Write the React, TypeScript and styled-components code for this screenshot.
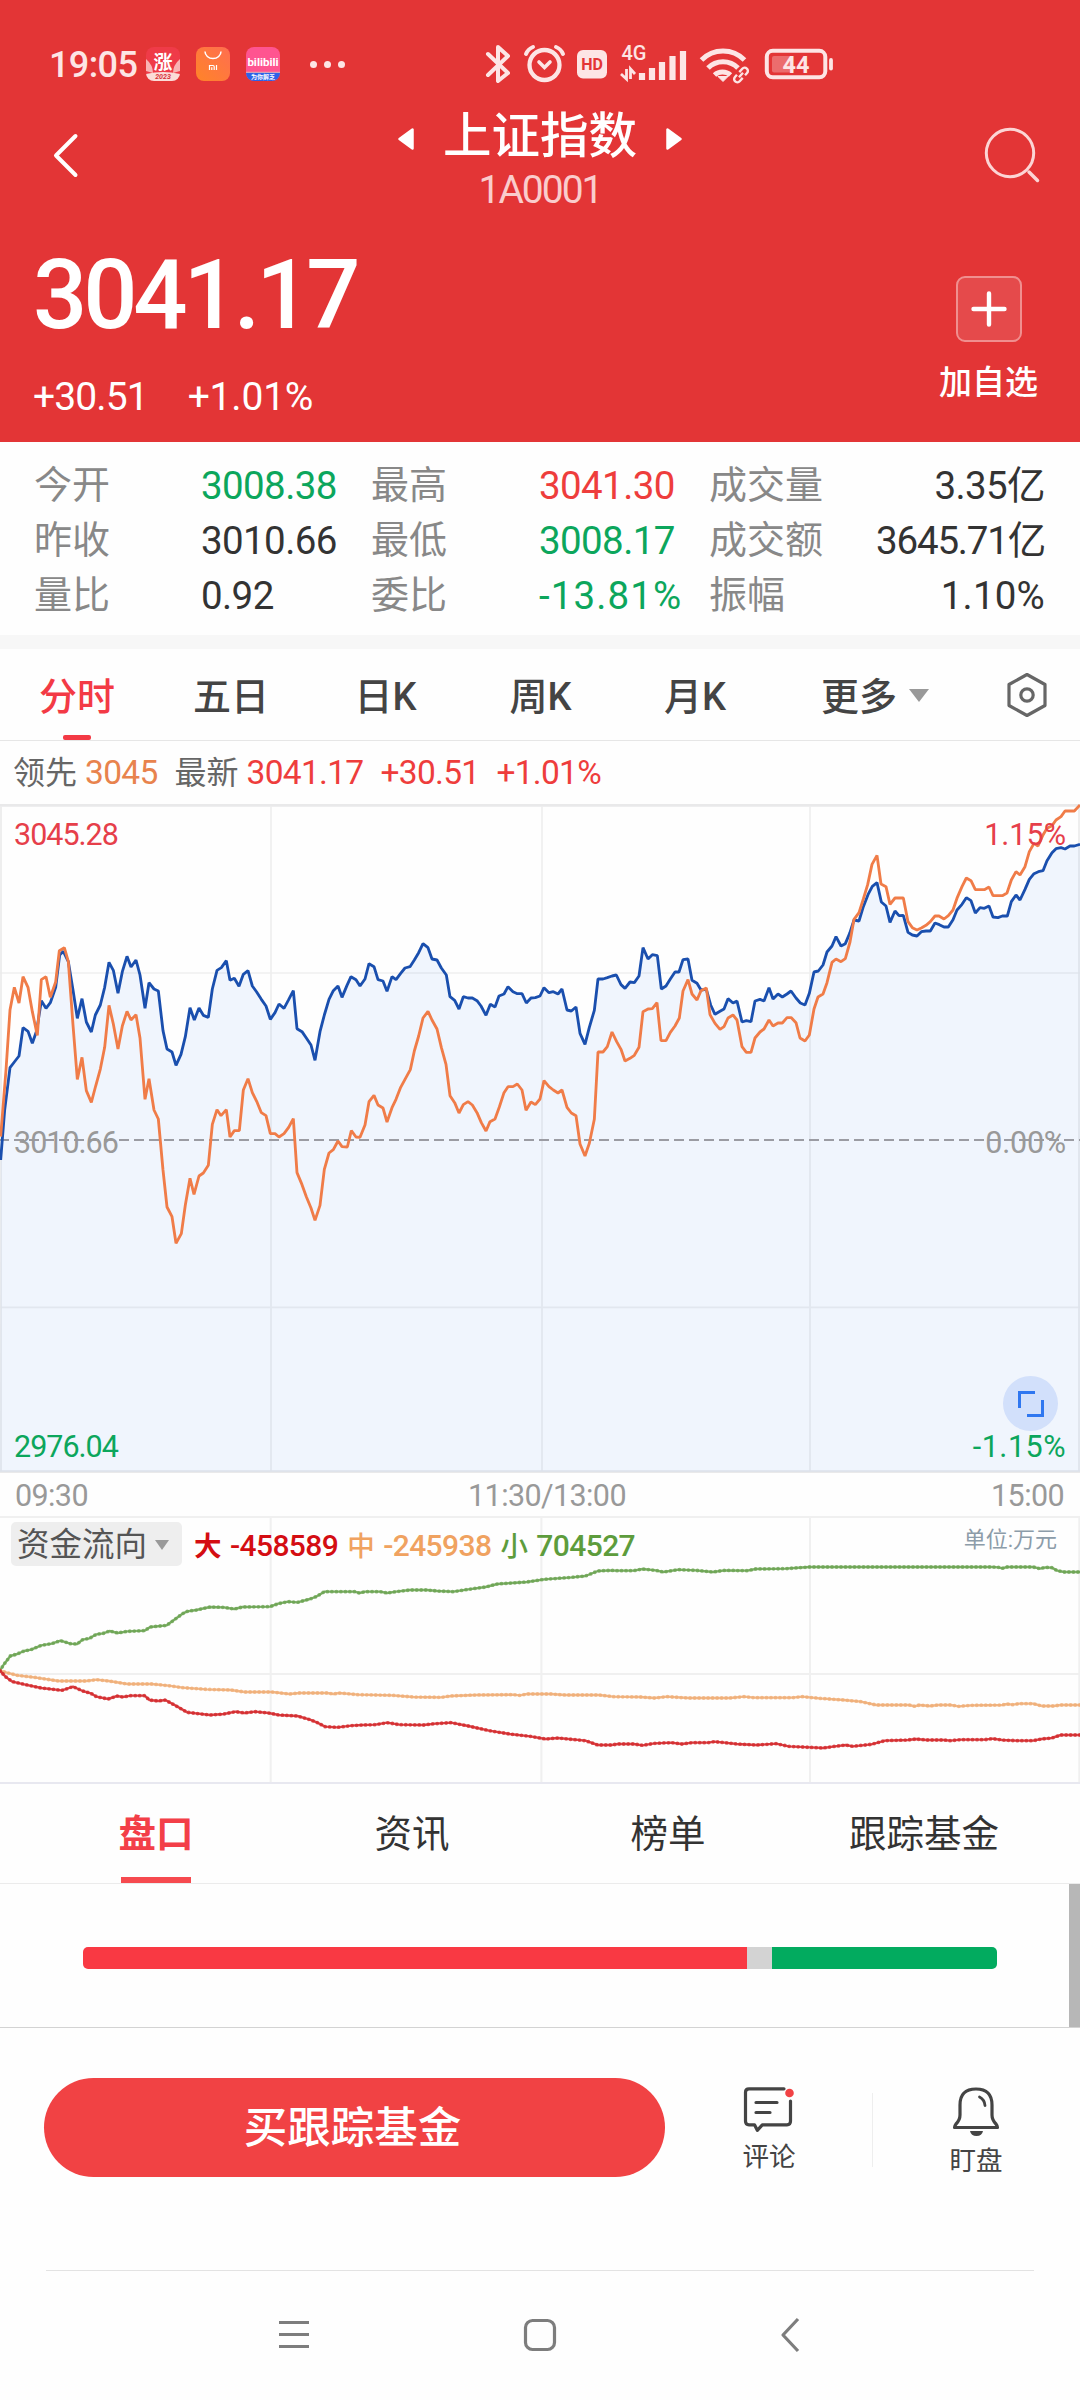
import React from "react";
import styled, { createGlobalStyle } from "styled-components";

const RED = "#e33536";
const UP = "#ee3d3c";
const DOWN = "#0ca65c";

const GlobalStyle = createGlobalStyle`
  * { box-sizing: border-box; }
  body { margin: 0; background: #fefefe; }
`;

const Screen = styled.div`
  width: 1080px;
  height: 2400px;
  overflow: hidden;
  display: flex;
  flex-direction: column;
  background: #fefefe;
  color: #333;
  font-family: Roboto, "Noto Sans CJK SC", sans-serif;
  white-space: nowrap;
`;

/* ---------- header ---------- */
const Header = styled.header`
  height: 442px;
  flex: none;
  background: ${RED};
  color: #fff;
`;

const StatusBar = styled.div`
  height: 104px;
  padding: 24px 246px 0 49px;
  display: flex;
  align-items: center;
`;

const Clock = styled.span`
  width: 97px;
  font-size: 36px;
  font-weight: 500;
  line-height: 40px;
  letter-spacing: -0.6px;
  color: #fde5e5;
  padding-top: 2px;
`;

const AppIcons = styled.div`
  display: flex;
  gap: 16px;
`;

const StatusIcons = styled.svg`
  margin-left: auto;
  display: block;
`;

const TitleBar = styled.div`
  height: 112px;
  display: grid;
  grid-template-columns: 200px 1fr 200px;
`;

const BackSlot = styled.div`
  padding: 29px 0 0 53px;
`;

const SearchSlot = styled.div`
  padding: 22px 39px 0 0;
  display: flex;
  justify-content: flex-end;
  align-items: flex-start;
`;

const TitleBlock = styled.div`
  display: flex;
  flex-direction: column;
  align-items: center;
`;

const TitleLine = styled.div`
  display: flex;
  align-items: center;
  gap: 29px;
  height: 62px;
  padding-top: 8px;
  svg { margin-bottom: 1px; }
`;

const Title = styled.h1`
  margin: 0 0 4px;
  font-size: 48.5px;
  line-height: 60px;
  font-weight: 500;
`;

const Code = styled.span`
  font-size: 39px;
  line-height: 44px;
  letter-spacing: -2px;
  color: #facccc;
  margin-top: 2px;
`;

const PriceArea = styled.div`
  display: flex;
  justify-content: space-between;
  padding: 0 42px 0 33px;
`;

const Price = styled.div`
  font-size: 95.5px;
  font-weight: 500;
  line-height: 110px;
  letter-spacing: -4.1px;
  margin-top: 24px;
`;

const Changes = styled.div`
  display: flex;
  gap: 40px;
  font-size: 39px;
  line-height: 44px;
  letter-spacing: -0.9px;
  margin-top: 25px;
  span + span { letter-spacing: -0.2px; }
`;

const AddButton = styled.button`
  border: 0;
  padding: 0;
  background: none;
  color: inherit;
  font: inherit;
  display: flex;
  flex-direction: column;
  align-items: center;
  margin-top: 60px;
  font-size: 33px;
  font-weight: 500;
  line-height: 44px;
  gap: 19px;
  height: 133px;
`;

const PlusBox = styled.span`
  width: 66px;
  height: 66px;
  border: 2px solid #f08f8f;
  border-radius: 9px;
  background: #e54a4b;
  display: flex;
  align-items: center;
  justify-content: center;
`;

/* ---------- statistics ---------- */
const Stats = styled.section`
  height: 193px;
  flex: none;
  padding: 16px 35px 0 34px;
  display: grid;
  grid-template-columns: 167px 170px 168px 170px 1fr;
  grid-auto-rows: 55px;
  font-size: 38.5px;
  line-height: 55px;
`;

const StatLabel = styled.span`
  color: #888;
  font-size: 38px;
`;

const StatValue = styled.span<{ $color?: string; $track?: number }>`
  color: ${(p) => p.$color || "#333"};
  letter-spacing: ${(p) => p.$track ?? -0.6}px;
`;

const LastCell = styled.span`
  display: flex;
  justify-content: space-between;
`;

const Band = styled.div`
  height: 14px;
  flex: none;
  background: #f7f7f7;
`;

/* ---------- period tabs ---------- */
const PeriodTabs = styled.nav`
  height: 92px;
  flex: none;
  display: flex;
  border-bottom: 1px solid #e6e6e6;
`;

const PeriodTab = styled.div<{ $active?: boolean; $width?: number }>`
  width: ${(p) => p.$width || 154}px;
  display: flex;
  justify-content: center;
  align-items: center;
  gap: 12px;
  position: relative;
  font-size: 38px;
  font-weight: 500;
  padding-bottom: 2px;
  color: ${(p) => (p.$active ? "#f33a45" : "#444")};
  svg, i { margin-top: 3px; }
  &::after {
    content: "";
    display: ${(p) => (p.$active ? "block" : "none")};
    position: absolute;
    bottom: 0;
    left: 63px;
    width: 28px;
    height: 5px;
    border-radius: 2px;
    background: #f33a45;
  }
`;

const Caret = styled.i<{ $w: number; $h: number }>`
  width: 0;
  height: 0;
  border: ${(p) => p.$w / 2}px solid transparent;
  border-top: ${(p) => p.$h}px solid #999;
  border-bottom: 0;
`;

const Legend = styled.div`
  height: 63px;
  flex: none;
  padding-left: 13px;
  display: flex;
  align-items: baseline;
  line-height: 63px;
  font-size: 33.5px;
  letter-spacing: -0.7px;
  color: ${UP};
`;

const LegendName = styled.span<{ $gap?: number }>`
  font-size: 32px;
  letter-spacing: 0;
  color: #666;
  margin-left: ${(p) => p.$gap || 0}px;
`;

const LegendValue = styled.span<{ $color?: string; $gap?: number }>`
  color: ${(p) => p.$color || UP};
  margin-left: ${(p) => p.$gap || 8}px;
`;

/* ---------- charts ---------- */
const ChartBox = styled.div<{ $h: number }>`
  height: ${(p) => p.$h}px;
  flex: none;
  position: relative;
  svg { display: block; }
`;

const ChartLabel = styled.span<{ $top: number; $right?: boolean; $color: string; $track?: number }>`
  position: absolute;
  top: ${(p) => p.$top}px;
  ${(p) => (p.$right ? "right: 14px;" : "left: 14px;")}
  font-size: 30.5px;
  line-height: 36px;
  letter-spacing: ${(p) => p.$track ?? -1}px;
  color: ${(p) => p.$color};
`;

const ExpandButton = styled.div`
  position: absolute;
  left: 1003px;
  top: 572px;
  width: 55px;
  height: 55px;
  border-radius: 50%;
  background: #d2e0fb;
`;

const TimeAxis = styled.div`
  height: 42px;
  flex: none;
  padding: 3px 16px 0 15px;
  display: grid;
  grid-template-columns: 1fr auto 1fr;
  font-size: 30.5px;
  line-height: 38px;
  letter-spacing: -0.6px;
  color: #999;
  span:nth-child(2) { padding-left: 15px; }
  span:last-child { text-align: right; }
`;

const FlowLegend = styled.div`
  position: absolute;
  left: 11px;
  right: 23px;
  top: 6px;
  height: 44px;
  display: flex;
  align-items: center;
  font-size: 30px;
  letter-spacing: -0.6px;
`;

const FlowChip = styled.span`
  width: 171px;
  height: 44px;
  border-radius: 5px;
  background: #eee;
  color: #555;
  font-size: 32.5px;
  line-height: 44px;
  letter-spacing: 0;
  display: flex;
  align-items: center;
  padding: 2px 0 0 6px;
  gap: 8px;
  margin-right: 12px;
`;

const FlowItem = styled.span<{ $color: string; $bold?: boolean }>`
  color: ${(p) => p.$color};
  margin-right: 9px;
  font-weight: 500;
  b {
    font-size: 27.5px;
    font-weight: ${(p) => (p.$bold ? 700 : 500)};
    margin-right: 9px;
  }
`;

const FlowUnit = styled.span`
  margin-left: auto;
  font-size: 22px;
  letter-spacing: 0;
  color: #8c9ca9;
  padding-bottom: 14px;
`;

/* ---------- section tabs ---------- */
const SectionTabs = styled.nav`
  height: 100px;
  flex: none;
  padding: 0 28px;
  display: grid;
  grid-template-columns: repeat(4, 256px);
  border-bottom: 1px solid #ebebeb;
`;

const SectionTab = styled.div<{ $active?: boolean }>`
  display: flex;
  justify-content: center;
  align-items: center;
  padding-bottom: 6px;
  font-size: 37.5px;
  font-weight: ${(p) => (p.$active ? 700 : 400)};
  color: ${(p) => (p.$active ? "#f33f48" : "#333")};
  position: relative;
  &::after {
    content: "";
    display: ${(p) => (p.$active ? "block" : "none")};
    position: absolute;
    bottom: 0;
    left: 93px;
    width: 70px;
    height: 6px;
    background: #f64a4f;
  }
`;

const Panel = styled.section`
  height: 144px;
  flex: none;
  display: flex;
  justify-content: space-between;
  align-items: flex-start;
  border-bottom: 1px solid #d3d3d3;
  padding-left: 83px;
`;

const RatioBar = styled.div`
  display: flex;
  width: 914px;
  height: 22px;
  margin-top: 63px;
  border-radius: 5px;
  overflow: hidden;
`;

const RatioPart = styled.div<{ $color: string }>`
  background: ${(p) => p.$color};
`;

const ScrollThumb = styled.div`
  width: 11px;
  height: 143px;
  background: #b7b7b7;
`;

/* ---------- bottom ---------- */
const ActionBar = styled.div`
  height: 243px;
  flex: none;
  margin: 0 46px;
  border-bottom: 1px solid #e3e3e3;
  display: flex;
  align-items: flex-start;
`;

const BuyButton = styled.button`
  width: 621px;
  height: 99px;
  margin: 50px 0 0 -2px;
  padding: 3px 4px 0 0;
  border: 0;
  border-radius: 50px;
  background: #f14244;
  color: #fff;
  font: 500 43.5px/96px Roboto, "Noto Sans CJK SC", sans-serif;
`;

const Action = styled.div<{ $left: number; $gap: number }>`
  width: 54px;
  margin: 58px 0 0 ${(p) => p.$left}px;
  display: flex;
  flex-direction: column;
  align-items: center;
  font-size: 26.5px;
  line-height: 32px;
  color: #444;
  svg { display: block; margin-bottom: ${(p) => p.$gap}px; }
`;

const Divider = styled.div`
  width: 1px;
  height: 74px;
  margin: 65px 0 0 76px;
  background: #eee;
`;

const SystemNav = styled.div`
  height: 129px;
  flex: none;
  padding: 46px 280px 0 278px;
  display: flex;
  justify-content: space-between;
  svg { display: block; }
`;

const HomeGlyph = styled.svg`
  margin-right: 10px;
`;

/* Points are stored on a grid three times finer than the drawn pixels. */
const INDEX_LINE: number[] = [
  2,1110, 14,960, 30,833, 43,816, 57,798, 69,713, 84,724, 97,760, 110,722, 124,632, 138,655, 151,638, 167,592, 179,495, 190,484, 205,515, 219,600, 232,685, 246,626, 259,696, 274,726, 286,675, 301,645, 314,592, 327,517, 340,541, 354,610, 367,545, 381,499, 393,531, 408,510, 420,555, 435,655, 447,578, 462,597, 475,603, 489,722, 501,777, 516,786, 528,826, 543,793, 556,740, 570,653, 583,690, 597,654, 610,676, 625,682, 637,597, 651,541, 664,533, 679,512, 690,571, 703,565, 717,589, 730,553, 744,542, 757,588, 770,606, 784,628, 798,648, 811,688, 825,668, 837,642, 852,655, 866,629, 880,602, 891,716, 906,725, 919,744, 933,765, 945,811, 960,725, 973,675, 987,628, 1000,602, 1014,588, 1026,622, 1041,586, 1053,560, 1068,569, 1080,588,
  1095,567, 1107,521, 1122,530, 1134,569, 1149,573, 1161,604, 1176,560, 1188,569, 1202,550, 1215,534, 1230,530, 1243,510, 1256,488, 1269,461, 1284,473, 1296,507, 1311,510, 1324,534, 1339,555, 1350,620, 1364,631, 1377,657, 1390,620, 1404,624, 1417,624, 1431,632, 1443,648, 1458,676, 1471,643, 1485,651, 1497,618, 1512,612, 1524,590, 1539,605, 1552,611, 1566,611, 1579,639, 1593,624, 1606,623, 1620,618, 1632,593, 1647,608, 1660,605, 1674,612, 1686,597, 1701,660, 1714,663, 1728,651, 1740,730, 1755,763, 1768,712, 1783,661, 1794,567, 1809,567, 1822,563, 1836,558, 1849,555, 1863,584, 1875,595, 1890,576, 1903,578, 1917,558, 1929,473, 1944,507, 1957,494, 1972,497, 1984,597, 1998,588, 2011,567, 2025,546, 2037,546, 2049,509, 2064,507, 2076,571, 2091,580, 2103,600, 2119,598, 2132,645, 2145,673, 2160,664,
  2172,657, 2184,626, 2199,639, 2211,633, 2226,696, 2239,692, 2253,695, 2265,633, 2280,628, 2292,633, 2307,593, 2319,627, 2334,612, 2347,621, 2361,612, 2373,603, 2388,624, 2401,639, 2415,645, 2428,610, 2442,546, 2455,543, 2469,525, 2481,486, 2496,468, 2508,440, 2523,468, 2536,461, 2549,430, 2562,390, 2577,393, 2590,350, 2604,314, 2617,289, 2631,278, 2644,336, 2658,348, 2670,397, 2685,363, 2697,377, 2710,376, 2724,427, 2737,435, 2751,438, 2764,425, 2778,423, 2791,423, 2805,399, 2818,404, 2832,411, 2845,411, 2859,389, 2871,360, 2886,343, 2899,323, 2913,332, 2926,369, 2940,353, 2953,355, 2967,348, 2979,381, 2994,383, 3007,378, 3022,378, 3034,335, 3048,315, 3060,330, 3075,298, 3088,268, 3102,251, 3115,245, 3129,242, 3141,212, 3156,188, 3168,176, 3183,173, 3195,177, 3210,168, 3223,168, 3240,163,
];

const LEAD_LINE: number[] = [
  2,1040, 18,840, 30,660, 43,592, 57,639, 69,560, 84,592, 97,665, 112,736, 124,569, 138,560, 151,622, 167,576, 178,482, 193,473, 205,515, 219,705, 232,868, 246,802, 259,902, 274,937, 287,888, 301,837, 314,772, 327,646, 340,702, 354,777, 367,708, 381,664, 393,690, 408,674, 420,744, 435,928, 447,866, 462,960, 475,987, 489,1140, 501,1251, 516,1280, 528,1360, 544,1331, 556,1245, 570,1165, 582,1213, 597,1158, 610,1149, 625,1126, 637,1003, 651,959, 663,977, 679,959, 690,1041, 703,1022, 718,1022, 730,900, 744,866, 757,908, 770,934, 784,968, 798,977, 811,1031, 825,1031, 837,1041, 852,1031, 866,1012, 880,986, 891,1148, 906,1184, 919,1220, 933,1254, 945,1291, 960,1246, 973,1138, 987,1089, 1000,1079, 1014,1053, 1026,1070, 1042,1071, 1054,1022, 1068,1041, 1080,1042,
  1095,1005, 1107,935, 1122,916, 1134,945, 1149,954, 1161,996, 1176,953, 1188,928, 1202,892, 1215,868, 1231,839, 1243,783, 1256,738, 1269,684, 1284,664, 1296,690, 1311,717, 1324,772, 1338,823, 1350,917, 1364,938, 1377,969, 1390,944, 1404,935, 1417,945, 1431,968, 1444,998, 1458,1023, 1470,995, 1485,987, 1498,951, 1512,908, 1524,890, 1539,890, 1552,882, 1566,900, 1578,961, 1593,936, 1606,944, 1620,927, 1632,872, 1647,890, 1660,900, 1674,909, 1686,900, 1701,952, 1714,969, 1728,977, 1740,1062, 1755,1098, 1768,1060, 1783,988, 1794,786, 1809,786, 1822,770, 1836,726, 1850,755, 1863,778, 1875,813, 1890,805, 1903,796, 1917,772, 1929,665, 1944,657, 1957,656, 1971,638, 1983,752, 1998,752, 2011,727, 2025,708, 2038,684, 2049,603, 2064,569, 2076,612, 2091,630, 2103,602, 2119,594, 2130,674, 2145,700, 2160,718,
  2172,710, 2184,684, 2199,675, 2211,690, 2226,770, 2239,787, 2253,787, 2265,744, 2280,726, 2292,717, 2307,690, 2319,708, 2334,699, 2347,699, 2361,683, 2374,683, 2388,698, 2400,744, 2415,753, 2428,735, 2442,657, 2454,621, 2469,612, 2481,578, 2496,517, 2508,507, 2523,515, 2536,506, 2550,456, 2562,388, 2577,368, 2590,327, 2603,284, 2616,223, 2631,196, 2643,282, 2658,290, 2670,343, 2685,324, 2697,324, 2710,324, 2724,395, 2737,413, 2751,420, 2764,414, 2778,406, 2791,395, 2805,378, 2817,378, 2832,387, 2845,377, 2859,360, 2872,322, 2886,290, 2899,264, 2913,272, 2926,299, 2940,299, 2953,299, 2967,291, 2979,317, 2994,317, 3007,317, 3021,309, 3034,270, 3048,245, 3060,255, 3075,230, 3088,185, 3102,160, 3114,168, 3129,135, 3141,115, 3156,107, 3168,90, 3183,80, 3195,63, 3210,63, 3223,63, 3240,45,
];

/* Money-flow points: 1568 units across the day, 3 units per pixel down. */
const SMALL_FLOW: number[] = [
  0,512, 5,495, 15,468, 25,462, 35,453, 45,449, 60,436, 75,431, 88,422, 102,431, 112,432, 120,419, 130,415, 140,403, 150,400, 159,393, 171,399, 185,394, 210,392, 218,381, 242,376, 252,361, 265,341, 272,334, 285,330, 305,321, 325,322, 340,327, 352,321, 392,320, 404,311, 418,305, 432,307, 450,297, 460,289, 471,275, 515,275, 522,279, 530,275, 552,275, 562,279, 575,275, 595,270, 620,270, 635,273, 658,275, 680,268, 705,261, 722,252, 765,246, 790,238, 830,232, 850,228, 868,213, 888,211, 895,212, 920,212, 933,207, 952,211, 963,216, 985,209, 1010,211, 1035,216, 1052,211, 1085,212, 1097,207, 1140,206, 1175,201, 1300,201, 1440,201, 1450,202, 1455,205, 1462,201, 1500,201, 1510,206, 1518,202, 1527,203, 1535,212, 1545,216, 1568,216,
];
const MID_FLOW: number[] = [
  0,512, 10,518, 25,526, 50,532, 85,543, 125,543, 140,539, 158,543, 185,552, 220,552, 245,557, 265,563, 300,568, 335,570, 355,576, 395,576, 420,582, 435,579, 475,579, 484,582, 492,579, 520,584, 570,586, 600,591, 640,592, 655,588, 690,585, 745,584, 755,586, 765,582, 800,582, 820,585, 870,585, 890,590, 930,591, 950,594, 968,590, 1000,594, 1060,594, 1080,590, 1095,593, 1150,593, 1165,590, 1190,595, 1225,600, 1250,605, 1272,615, 1320,615, 1328,619, 1335,615, 1350,618, 1362,615, 1380,615, 1392,619, 1410,616, 1455,615, 1462,612, 1470,614, 1480,611, 1500,611, 1513,618, 1530,618, 1540,615, 1568,615,
];
const BIG_FLOW: number[] = [
  0,512, 8,530, 18,545, 35,553, 60,564, 90,571, 106,560, 120,573, 132,580, 140,590, 157,597, 170,588, 178,591, 190,587, 210,587, 217,600, 230,603, 240,600, 255,617, 272,637, 305,645, 325,642, 342,635, 355,639, 370,635, 390,639, 405,645, 432,648, 450,659, 460,667, 472,680, 490,682, 510,677, 525,675, 545,674, 562,668, 580,674, 615,675, 632,671, 655,668, 680,678, 710,692, 740,702, 770,709, 792,717, 810,714, 850,722, 868,735, 888,735, 897,732, 920,732, 933,736, 950,730, 975,728, 990,732, 1005,728, 1028,728, 1037,725, 1052,728, 1070,732, 1098,735, 1127,731, 1145,739, 1185,743, 1195,744, 1212,739, 1228,735, 1238,739, 1265,733, 1285,722, 1318,720, 1330,717, 1345,720, 1370,720, 1380,722, 1395,719, 1430,719, 1441,716, 1455,720, 1475,722, 1500,722, 1512,717, 1527,714, 1540,705, 1568,705,
];

const toPath = (pts: number[]) => {
  let d = "";
  for (let i = 0; i < pts.length; i += 2) d += `${i ? "L" : "M"}${pts[i]} ${pts[i + 1]}`;
  return d;
};

const IndexChart = () => {
  const line = toPath(INDEX_LINE);
  return (
    <svg width="1080" height="670" viewBox="0 42 3240 2010">
      <g stroke="#efefef" strokeWidth="5" fill="none">
        <path d="M813 50V2045M1626 50V2045M2430 50V2045M0 549H3240M0 1552H3240" />
        <path d="M3 50V2045M3237 50V2045" stroke="#ebebeb" />
        <path d="M0 46H3240M0 2045H3240" stroke="#e9e9ea" strokeWidth="8" />
      </g>
      <path d={`${line}V2045H0Z`} fill="#2470f0" fillOpacity=".064" />
      <path d="M-3 1050H3240" stroke="#9b9ca3" strokeWidth="6" strokeDasharray="30 15" />
      <path d={line} fill="none" stroke="#1a4fae" strokeWidth="8.500" strokeLinejoin="bevel" />
      <path d={toPath(LEAD_LINE)} fill="none" stroke="#f07c48" strokeWidth="8.500" strokeLinejoin="bevel" />
    </svg>
  );
};

const FlowLine = ({ points, color }: { points: number[]; color: string }) => (
  <g fill="none" stroke={color} strokeLinecap="round" strokeLinejoin="round">
    <path d={toPath(points)} strokeWidth="2.4" vectorEffect="non-scaling-stroke" opacity=".85" />
    <path d={toPath(points)} strokeWidth="3.8" strokeDasharray="0 4.5" vectorEffect="non-scaling-stroke" opacity=".75" />
  </g>
);

const FlowChart = () => (
  <svg width="1080" height="268" viewBox="0 48 1568 804" preserveAspectRatio="none">
    <g stroke="#f0f0f0" strokeWidth="2">
      <path d="M0 51H1568M0 522H1568" vectorEffect="non-scaling-stroke" />
      <path d="M393 51V846M786 51V846M1176 51V846M1567 51V846" vectorEffect="non-scaling-stroke" />
      <path d="M0 849H1568" stroke="#e8e8f0" vectorEffect="non-scaling-stroke" />
    </g>
    <FlowLine points={SMALL_FLOW} color="#6aa350" />
    <FlowLine points={MID_FLOW} color="#f0ad75" />
    <FlowLine points={BIG_FLOW} color="#d4282b" />
  </svg>
);

const StatusGlyphs = () => (
  <StatusIcons width="350" height="44" viewBox="484 42 350 44" fill="none" stroke="#fde5e5">
    <path d="M488 54L508 73L498 81V47L508 56L488 75" strokeWidth="4" strokeLinejoin="round" strokeLinecap="round" />
    <circle cx="544.500" cy="65" r="15" strokeWidth="4.300" />
    <path d="M539 62l5.500 5.500L550 62" strokeWidth="3.600" strokeLinecap="round" />
    <path d="M526 54q2-5 7-7M563 54q-2-5-7-7" strokeWidth="4" strokeLinecap="round" />
    <rect x="577" y="50" width="30" height="28.500" rx="6" fill="#fde5e5" stroke="none" />
    <text x="592" y="70" fontSize="16" fontWeight="700" fontFamily="Roboto, sans-serif" textAnchor="middle" fill={RED} stroke="none">HD</text>
    <text x="621.500" y="60" fontSize="20" fontWeight="500" fontFamily="Roboto, sans-serif" fill="#fde5e5" stroke="none">4G</text>
    <path d="M626.500 69V79L621 74M630.500 79V69L635 74" strokeWidth="2.800" />
    <path d="M642 73V80M652 68V80M662 62V80M672.500 56V80M683 51V80" strokeWidth="6.200" />
    <path d="M701.500 60a30 30 0 0 1 43 0M708 68a21 21 0 0 1 30 0M714.500 75a12 12 0 0 1 16 0" strokeWidth="5" />
    <path d="M718 76.500h10l-5 5z" fill="#fde5e5" strokeWidth="1" />
    <g transform="translate(741 75) rotate(-48)" strokeWidth="2.400">
      <path d="M-1 3.200h-4.500a3.200 3.200 0 0 1 0-6.400h3M1-3.200h4.500a3.200 3.200 0 0 1 0 6.400h-3" />
      <path d="M-3 0H3" />
    </g>
    <rect x="766.800" y="50.800" width="58.500" height="26.500" rx="6" strokeWidth="4" />
    <rect x="772" y="56" width="20" height="16.500" rx="2" fill="#ec6c6d" stroke="none" />
    <path d="M831 60v8.500" strokeWidth="3.800" strokeLinecap="round" />
    <text x="796" y="73" fontSize="23.500" fontWeight="700" fontFamily="Roboto, sans-serif" textAnchor="middle" fill="#fde5e5" stroke="none">44</text>
  </StatusIcons>
);

const NewsAppIcon = () => (
  <svg width="34" height="34" viewBox="0 0 34 34">
    <clipPath id="a"><rect width="34" height="34" rx="8" /></clipPath>
    <g clipPath="url(#a)">
      <rect width="34" height="34" fill="#ef3b48" />
      <path d="M0 12q7 6 7 14L0 24zM34 12q-7 6-7 14l7-2z" fill="#f9b4b4" />
      <path d="M0 27q17-4 34 0v7H0z" fill="#fbdcd8" />
      <text x="17" y="22" fontSize="19" fontWeight="700" textAnchor="middle" fill="#fff" fontFamily="Noto Sans CJK SC, sans-serif">涨</text>
      <text x="17" y="32.300" fontSize="7" fontWeight="700" fontStyle="italic" textAnchor="middle" fill="#d6323a" fontFamily="Roboto, sans-serif">2023</text>
    </g>
  </svg>
);

const StoreAppIcon = () => (
  <svg width="34" height="34" viewBox="0 0 34 34">
    <linearGradient id="b" x1="0" y1="1" x2="1" y2="0"><stop stopColor="#ff8428" /><stop offset="1" stopColor="#ff6e50" /></linearGradient>
    <rect width="34" height="34" rx="8" fill="url(#b)" />
    <path d="M9 4.500a8 7 0 0 0 16 0" fill="none" stroke="#fff" strokeWidth="1.500" />
    <path d="M13.500 23v-4.500h3.500q1.200 0 1.200 1.200V23M15.800 20.300V23M20.500 18V23" fill="none" stroke="#fff" strokeWidth="1.200" />
  </svg>
);

const VideoAppIcon = () => (
  <svg width="34" height="34" viewBox="0 0 34 34">
    <clipPath id="c"><rect width="34" height="34" rx="8" /></clipPath>
    <g clipPath="url(#c)">
      <rect width="34" height="34" fill="#ff5490" />
      <rect y="25" width="34" height="9" fill="#2d62e8" />
      <path d="M0 25.300H34" stroke="#f7b3b0" />
      <text x="17" y="19" fontSize="11.500" fontWeight="700" textAnchor="middle" fill="#fff" fontFamily="Roboto, sans-serif">bilibili</text>
      <text x="17" y="31.800" fontSize="6" fontWeight="700" textAnchor="middle" fill="#fff" fontFamily="Noto Sans CJK SC, sans-serif">为你解乏</text>
    </g>
  </svg>
);

const MoreDots = styled.div`
  display: flex;
  gap: 7px;
  margin-left: 30px;
  i { width: 7px; height: 7px; border-radius: 50%; background: #fde5e5; }
`;

const App = () => (
  <Screen>
    <GlobalStyle />
    <Header>
      <StatusBar>
        <Clock>19:05</Clock>
        <AppIcons>
          <NewsAppIcon />
          <StoreAppIcon />
          <VideoAppIcon />
        </AppIcons>
        <MoreDots><i /><i /><i /></MoreDots>
        <StatusGlyphs />
      </StatusBar>
      <TitleBar>
        <BackSlot>
          <svg width="26" height="46" viewBox="0 0 26 46"><path d="M22.500 3L3 22.500L22.500 42" fill="none" stroke="#fff" strokeWidth="4" strokeLinecap="round" strokeLinejoin="round" /></svg>
        </BackSlot>
        <TitleBlock>
          <TitleLine>
            <svg width="16" height="22" viewBox="0 0 16 22"><path d="M14.500 1.500V20.500L1.500 11Z" fill="#fff" stroke="#fff" strokeWidth="2.500" strokeLinejoin="round" /></svg>
            <Title>上证指数</Title>
            <svg width="16" height="22" viewBox="0 0 16 22"><path d="M1.500 1.500V20.500L14.500 11Z" fill="#fff" stroke="#fff" strokeWidth="2.500" strokeLinejoin="round" /></svg>
          </TitleLine>
          <Code>1A0001</Code>
        </TitleBlock>
        <SearchSlot>
          <svg width="58" height="58" viewBox="0 0 58 58" fill="none" stroke="#fcd5d5" strokeWidth="3" strokeLinecap="round"><circle cx="27" cy="27" r="23.700" /><path d="M46 46l8.500 8.500" strokeWidth="3.500" /></svg>
        </SearchSlot>
      </TitleBar>
      <PriceArea>
        <div>
          <Price>3041.17</Price>
          <Changes><span>+30.51</span><span>+1.01%</span></Changes>
        </div>
        <AddButton>
          <PlusBox>
            <svg width="36" height="36" viewBox="0 0 36 36"><path d="M18 2.500V33.500M2.500 18H33.500" stroke="#fff" strokeWidth="4.400" strokeLinecap="round" /></svg>
          </PlusBox>
          加自选
        </AddButton>
      </PriceArea>
    </Header>

    <Stats>
      <StatLabel>今开</StatLabel><StatValue $color={DOWN}>3008.38</StatValue>
      <StatLabel>最高</StatLabel><StatValue $color={UP}>3041.30</StatValue>
      <LastCell><StatLabel>成交量</StatLabel><StatValue>3.35亿</StatValue></LastCell>
      <StatLabel>昨收</StatLabel><StatValue>3010.66</StatValue>
      <StatLabel>最低</StatLabel><StatValue $color={DOWN}>3008.17</StatValue>
      <LastCell><StatLabel>成交额</StatLabel><StatValue $track={-1.2}>3645.71亿</StatValue></LastCell>
      <StatLabel>量比</StatLabel><StatValue>0.92</StatValue>
      <StatLabel>委比</StatLabel><StatValue $color={DOWN} $track={1.1}>-13.81%</StatValue>
      <LastCell><StatLabel>振幅</StatLabel><StatValue $track={0.2}>1.10%</StatValue></LastCell>
    </Stats>
    <Band />

    <PeriodTabs>
      <PeriodTab $active>分时</PeriodTab>
      <PeriodTab>五日</PeriodTab>
      <PeriodTab $width={155}>日K</PeriodTab>
      <PeriodTab $width={155}>周K</PeriodTab>
      <PeriodTab>月K</PeriodTab>
      <PeriodTab $width={206}>更多<Caret $w={20} $h={13} /></PeriodTab>
      <PeriodTab $width={98}>
        <svg width="42" height="46" viewBox="0 0 42 46" fill="none" stroke="#666" strokeWidth="3.200" strokeLinejoin="round"><path d="M21 2.500L39 12.500V33.500L21 43.500L3 33.500V12.500Z" /><circle cx="21" cy="23" r="6.200" /></svg>
      </PeriodTab>
    </PeriodTabs>

    <Legend>
      <LegendName>领先</LegendName>
      <LegendValue $color="#e8834d">3045</LegendValue>
      <LegendName $gap={17}>最新</LegendName>
      <LegendValue>3041.17</LegendValue>
      <LegendValue $gap={17}>+30.51</LegendValue>
      <LegendValue $gap={17}>+1.01%</LegendValue>
    </Legend>

    <ChartBox $h={670}>
      <IndexChart />
      <ChartLabel $top={13} $color="#e63f4a">3045.28</ChartLabel>
      <ChartLabel $top={13} $right $track={0} $color="#e63f4a">1.15%</ChartLabel>
      <ChartLabel $top={321} $color="#999">3010.66</ChartLabel>
      <ChartLabel $top={321} $right $track={-0.2} $color="#999">0.00%</ChartLabel>
      <ChartLabel $top={625} $color={DOWN}>2976.04</ChartLabel>
      <ChartLabel $top={625} $right $track={0.5} $color={DOWN}>-1.15%</ChartLabel>
      <ExpandButton>
        <svg width="55" height="55" viewBox="0 0 55 55" fill="none" stroke="#2f77f0" strokeWidth="3"><path d="M32 16.500H16.500V32M39.500 24V39.500H24" /></svg>
      </ExpandButton>
    </ChartBox>
    <TimeAxis><span>09:30</span><span>11:30/13:00</span><span>15:00</span></TimeAxis>

    <ChartBox $h={268}>
      <FlowChart />
      <FlowLegend>
        <FlowChip>资金流向<Caret $w={14} $h={10} /></FlowChip>
        <FlowItem $color="#d40d12" $bold><b>大</b>-458589</FlowItem>
        <FlowItem $color="#f0a260"><b>中</b>-245938</FlowItem>
        <FlowItem $color="#5d9c3c"><b>小</b>704527</FlowItem>
        <FlowUnit>单位:万元</FlowUnit>
      </FlowLegend>
    </ChartBox>

    <SectionTabs>
      <SectionTab $active>盘口</SectionTab>
      <SectionTab>资讯</SectionTab>
      <SectionTab>榜单</SectionTab>
      <SectionTab>跟踪基金</SectionTab>
    </SectionTabs>

    <Panel>
      <RatioBar>
        <RatioPart $color="#f93943" style={{ width: 664 }} />
        <RatioPart $color="#d3d3d3" style={{ width: 25 }} />
        <RatioPart $color="#02ab5f" style={{ width: 225 }} />
      </RatioBar>
      <ScrollThumb />
    </Panel>

    <ActionBar>
      <BuyButton>买跟踪基金</BuyButton>
      <Action $left={77} $gap={7}>
        <svg width="54" height="48" viewBox="743 2086 54 48" fill="none" stroke="#444" strokeWidth="3.200" strokeLinejoin="round" strokeLinecap="round">
          <path d="M785 2088.800H750q-3.500 0-3.500 3.500v29q0 3.500 3.500 3.500h5.500l2.800 5.500 5-5.500H788q3.500 0 3.500-3.500V2101" />
          <path d="M757 2102.500H778M757 2112.500H771" />
          <circle cx="790.500" cy="2093" r="4.300" fill="#f14244" stroke="none" />
        </svg>
        评论
      </Action>
      <Divider />
      <Action $left={76} $gap={7}>
        <svg width="54" height="52" viewBox="949 2086 54 52" fill="none" stroke="#444" strokeWidth="3.200" strokeLinejoin="round" strokeLinecap="round">
          <path d="M954.500 2127.500q0-1.500 1.500-3.500 4-4 4-9v-10q0-16 16-16t16 16v10q0 5 4 9 1.500 2 1.500 3.500z" />
          <path d="M979.500 2097q5 2.500 5.500 8.500" strokeWidth="2.800" />
          <path d="M970 2131h13q-1 5-6.500 5t-6.500-5z" fill="#444" stroke="none" />
        </svg>
        盯盘
      </Action>
    </ActionBar>

    <SystemNav>
      <svg width="32" height="36" viewBox="0 0 32 36" stroke="#7d7d7d" strokeWidth="3"><path d="M1 5.500H31M1 17.500H31M1 29.500H31" /></svg>
      <HomeGlyph width="36" height="36" viewBox="0 0 36 36" fill="none" stroke="#7d7d7d" strokeWidth="3.200"><rect x="3.500" y="3.500" width="29" height="29" rx="7" /></HomeGlyph>
      <svg width="20" height="36" viewBox="0 0 20 36" fill="none" stroke="#7d7d7d" strokeWidth="3.200"><path d="M18 2L3 18L18 34" strokeLinejoin="round" /></svg>
    </SystemNav>
  </Screen>
);

export default App;
